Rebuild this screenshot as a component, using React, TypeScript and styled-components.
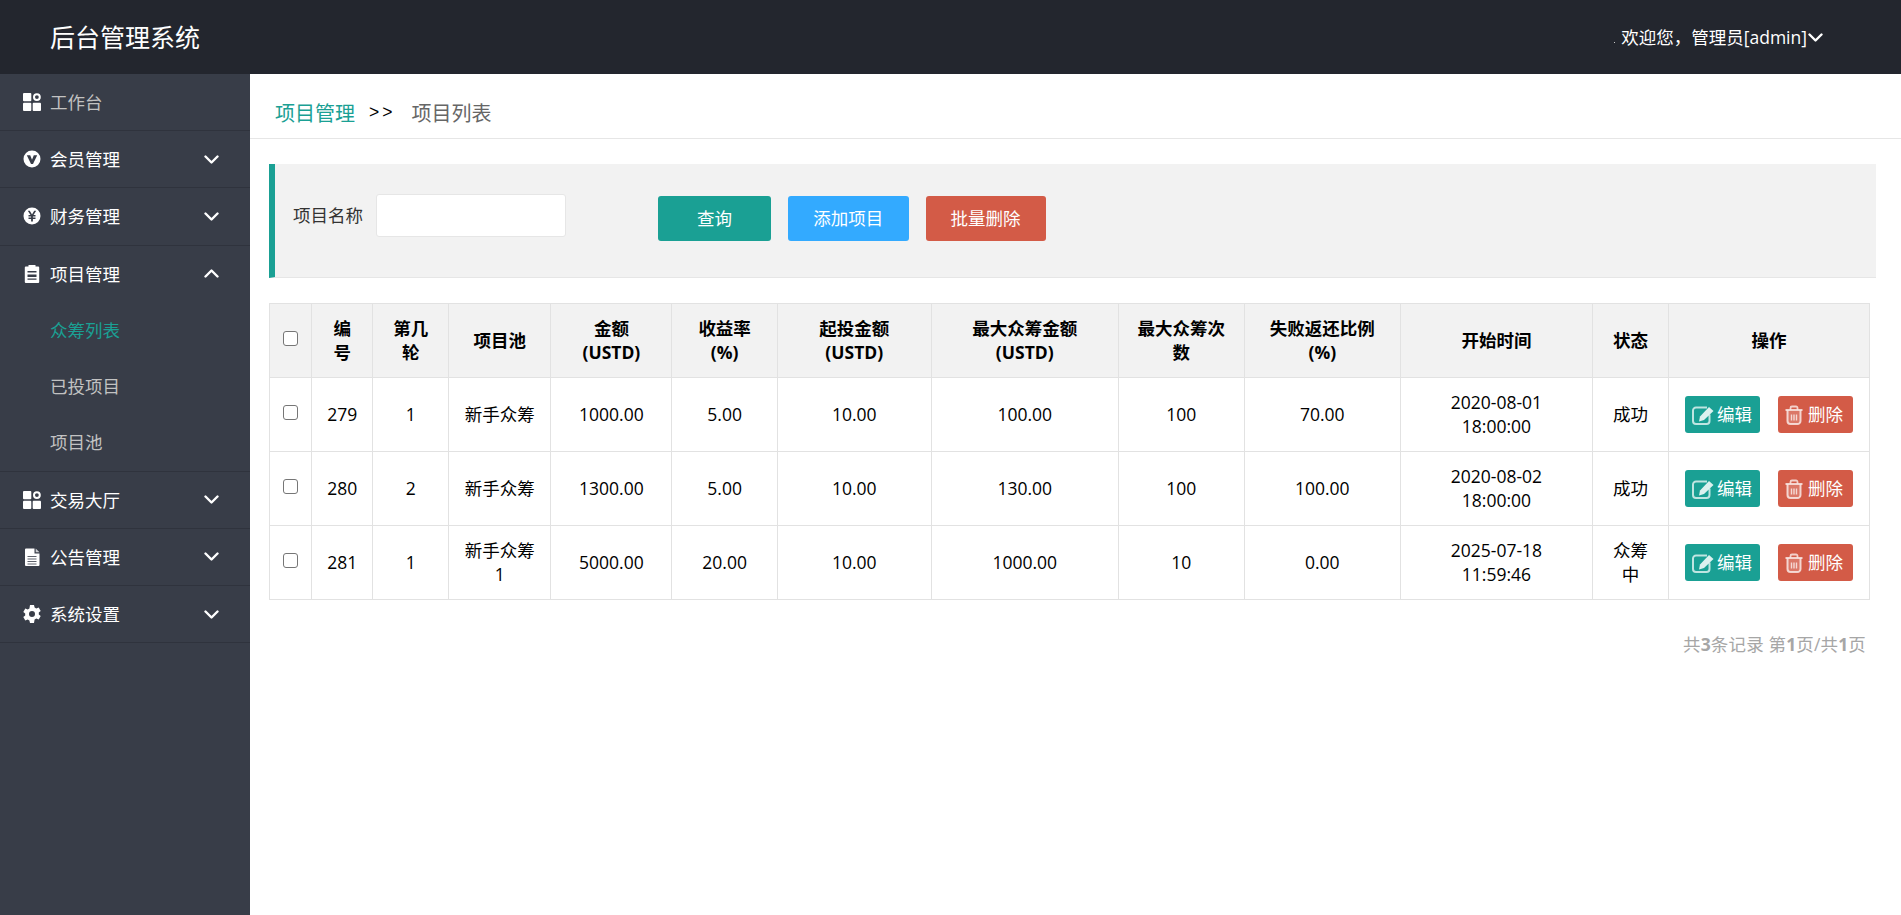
import React from "react";
import styled, { createGlobalStyle } from "styled-components";

const Global = createGlobalStyle`
  html, body { margin: 0; padding: 0; height: 100%; background: #fff; }
  body {
    font-family: "Open Sans", "Noto Sans CJK SC", sans-serif;
    font-size: 17.5px;
    color: #000;
    overflow: hidden;
  }
  #root { height: 100%; }
`;

const Page = styled.div`
  height: 915px;
  display: flex;
  flex-direction: column;
`;

const TopBar = styled.header`
  height: 74px;
  flex: none;
  background: #23262e;
  color: #fff;
  display: flex;
  align-items: center;
  justify-content: space-between;
  padding: 0 78px 0 50px;
`;

const Brand = styled.div`
  font-size: 25px;
  line-height: 74px;
`;

const UserMenu = styled.div`
  display: flex;
  align-items: center;
  gap: 1px;
  line-height: 74px;
`;

const UserDot = styled.i`
  width: 1px;
  height: 1px;
  background: #c8c8c8;
  margin-right: 5px;
  transform: translateY(5px);
`;

const Body = styled.div`
  flex: 1;
  display: flex;
  min-height: 0;
`;

const Sidebar = styled.nav`
  width: 250px;
  flex: none;
  background: #383d48;
`;

const NavGroup = styled.div`
  border-bottom: 1px solid #2f333d;
`;

const NavHead = styled.div<{ $dim?: boolean }>`
  height: 56.2px;
  display: flex;
  align-items: center;
  padding: 0 31.5px 0 22px;
  color: ${(p) => (p.$dim ? "#c2c2c2" : "#fff")};
`;

const NavIcon = styled.svg`
  width: 20px;
  height: 20px;
  flex: none;
  margin-right: 8px;
  fill: #fff;
`;

const NavLabel = styled.span`
  flex: 1;
  margin-bottom: 1px;
`;

const Chevron = styled.svg<{ $up?: boolean }>`
  width: 15px;
  height: 9px;
  flex: none;
  fill: none;
  stroke: currentColor;
  stroke-width: 2.4;
  stroke-linecap: round;
  stroke-linejoin: round;
  transform: ${(p) => (p.$up ? "rotate(180deg)" : "none")};
`;

const SubItem = styled.div<{ $active?: boolean }>`
  height: 56.3px;
  display: flex;
  align-items: center;
  padding: 0 0 1px 50px;
  box-sizing: border-box;
  color: ${(p) => (p.$active ? "#1aa094" : "#c2c2c2")};
`;

const Main = styled.main`
  flex: 1;
  min-width: 0;
  display: flex;
  flex-direction: column;
`;

const Crumbs = styled.div`
  height: 52px;
  flex: none;
  border-bottom: 1px solid #e6e6e6;
  display: flex;
  align-items: center;
  padding: 12px 0 0 25px;
  font-size: 20px;
`;

const CrumbLink = styled.span`
  color: #1aa094;
`;

const CrumbSep = styled.span`
  color: #000;
  font-family: "Liberation Sans", sans-serif;
  font-size: 17.5px;
  margin: 0 16px 0 14px;
  letter-spacing: 3px;
`;

const CrumbCurrent = styled.span`
  color: #666;
`;

const Content = styled.div`
  padding: 25px 25px 0 19px;
`;

const Filter = styled.div`
  height: 114px;
  box-sizing: border-box;
  background: #f2f2f2;
  border-left: 6px solid #1aa094;
  border-bottom: 1px solid #e6e6e6;
  display: flex;
  padding-left: 18px;
  padding-top: 30px;
`;

const FilterLabel = styled.label`
  color: #333;
  line-height: 43px;
  width: 83px;
  flex: none;
`;

const FilterInput = styled.input`
  width: 190px;
  height: 43px;
  box-sizing: border-box;
  border: 1px solid #e6e6e6;
  border-radius: 3px;
  background: #fff;
  padding: 0 10px;
  outline: none;
  flex: none;
`;

const Actions = styled.div`
  display: flex;
  margin-left: 92px;
  margin-top: 2px;
  gap: 17px;
`;

const Action = styled.button<{ $bg: string; $w: number }>`
  height: 45px;
  width: ${(p) => p.$w}px;
  border: 0;
  border-radius: 3px;
  background: ${(p) => p.$bg};
  color: #fff;
  font: inherit;
  padding: 0 0 2px;
`;

const Table = styled.table`
  margin-top: 25px;
  width: 1600px;
  table-layout: fixed;
  border-collapse: collapse;
  color: #000;
`;

const Col = styled.col<{ $w: number }>`
  width: ${(p) => p.$w}px;
`;

const HeadCell = styled.th`
  height: 74px;
  box-sizing: border-box;
  background: #f2f2f2;
  border: 1px solid #e2e2e2;
  padding: 11px 15px 13px;
  line-height: 24px;
  font-weight: 700;
  text-align: center;
  vertical-align: middle;
`;

const Cell = styled.td`
  height: 74px;
  box-sizing: border-box;
  border: 1px solid #e2e2e2;
  padding: 11px 15px 13px;
  line-height: 24px;
  text-align: center;
  vertical-align: middle;
`;

const BoxCell = styled(Cell)`
  padding: 0;
`;

const ActionCell = styled(Cell)`
  padding: 0;
`;

const BoxHead = styled(HeadCell)`
  padding: 0;
`;

const Check = styled.input.attrs({ type: "checkbox" })`
  appearance: none;
  display: block;
  width: 15px;
  height: 15px;
  box-sizing: border-box;
  margin: -4px auto 0;
  border: 1.5px solid #767676;
  border-radius: 3px;
  background: #fff;
`;

const RowActions = styled.div`
  display: flex;
  justify-content: center;
  gap: 18px;
`;

const RowButton = styled.button<{ $bg: string; $gap: number }>`
  width: 75px;
  height: 37px;
  border: 0;
  border-radius: 3px;
  padding: 0 0 0 7px;
  background: ${(p) => p.$bg};
  color: #fff;
  font: inherit;
  line-height: 37px;
  display: flex;
  align-items: center;
  gap: ${(p) => p.$gap}px;
`;

const RowIcon = styled.svg<{ $w: number }>`
  width: ${(p) => p.$w}px;
  height: 20px;
  flex: none;
  fill: none;
  stroke: rgba(255, 255, 255, 0.72);
`;

const Pager = styled.div`
  width: 1597px;
  margin-top: 32px;
  text-align: right;
  color: #a6a6a6;
  line-height: 24px;
  letter-spacing: 0.15px;
  b { font-weight: 700; }
`;

const ChevronIcon = ({ up }: { up?: boolean }) => (
  <Chevron $up={up} viewBox="0 0 15 9">
    <path d="M1.500 1.500 7.500 7.500 13.500 1.500" />
  </Chevron>
);

const AppIcon = () => (
  <NavIcon viewBox="0 0 20 20">
    <rect x="1" y="1" width="8.300" height="8.300" rx="1" />
    <rect x="1" y="10.700" width="8.300" height="8.300" rx="1" />
    <rect x="10.700" y="10.700" width="8.300" height="8.300" rx="1" />
    <circle cx="14.900" cy="5.100" r="2.900" fill="none" stroke="#fff" strokeWidth="2" />
  </NavIcon>
);

const VipIcon = () => (
  <NavIcon viewBox="0 0 20 20">
    <path fillRule="evenodd" d="M10 1.500a8.500 8.500 0 1 0 0 17 8.500 8.500 0 0 0 0-17ZM4.800 6.300h3.400L10 10.800l1.800-4.500h3.400L11 15H9Z" />
  </NavIcon>
);

const YenIcon = () => (
  <NavIcon viewBox="0 0 20 20">
    <path fillRule="evenodd" d="M10 1.500a8.500 8.500 0 1 0 0 17 8.500 8.500 0 0 0 0-17ZM5.800 4.800h2l2.200 3.700 2.200-3.700h2L11.500 9h2v1.400h-2.600v1.200h2.600V13h-2.600v2.600H9.100V13H6.500v-1.400h2.600v-1.200H6.500V9h2Z" />
  </NavIcon>
);

const ClipIcon = () => (
  <NavIcon viewBox="0 0 20 20">
    <path fillRule="evenodd" d="M6.500 1h7v1.500h2.700a1 1 0 0 1 1 1V18a1 1 0 0 1-1 1H3.800a1 1 0 0 1-1-1V3.500a1 1 0 0 1 1-1h2.700ZM5.500 7v1.500h9V7Zm0 3.500V13h9v-2.500Zm0 4v1.300h9v-1.300Z" />
  </NavIcon>
);

const DocIcon = () => (
  <NavIcon viewBox="0 0 20 20">
    <path d="M3 2.500a1 1 0 0 1 1-1h8.500v5h5V18a1 1 0 0 1-1 1H4a1 1 0 0 1-1-1Z" />
    <path d="M13.700 1.500 17.500 5.300h-3.800Z" opacity=".75" />
    <path d="M5.500 9.500h9M5.500 12h9M5.500 14.500h9M5.500 17h9" stroke="#383d48" strokeWidth="1" opacity=".8" />
  </NavIcon>
);

const GearIcon = () => (
  <NavIcon viewBox="0 0 20 20">
    <path fillRule="evenodd" d="M8 1h4l.6 2.500 1.700.9 2.400-.9 2 3.400-1.900 1.700v1.800l1.900 1.700-2 3.400-2.400-.9-1.700.9L12 19H8l-.6-2.500-1.700-.9-2.400.9-2-3.400 1.900-1.700V9.600L1.300 7.900l2-3.400 2.400.9 1.700-.9ZM10 7a3 3 0 1 0 0 6 3 3 0 0 0 0-6Z" />
  </NavIcon>
);

const EditIcon = () => (
  <RowIcon $w={23} viewBox="0 0 23 20">
    <path d="M15 2.500H4a3 3 0 0 0-3 3V16a3 3 0 0 0 3 3h10.500a3 3 0 0 0 3-3V9.500" strokeWidth="2" />
    <path d="m8 11.500 9-9.500 4.500 4-9.500 9-5 1.500Z" fill="rgba(255,255,255,0.85)" stroke="none" />
  </RowIcon>
);

const TrashIcon = () => (
  <RowIcon $w={18} viewBox="0 0 18 20">
    <path d="M0.500 5h17" strokeWidth="2" />
    <path d="M5.500 4.500V3a1.500 1.500 0 0 1 1.500-1.500h4A1.500 1.500 0 0 1 12.500 3v1.500" strokeWidth="1.800" />
    <path d="M2.500 5.500V16a3 3 0 0 0 3 3h7a3 3 0 0 0 3-3V5.500" strokeWidth="2" fill="rgba(255,255,255,0.18)" />
    <path d="M6.500 9.500v6M9 9.500v6M11.500 9.500v6" strokeWidth="1.400" />
  </RowIcon>
);

const widths = [42.3, 61, 76, 102, 121.2, 105.3, 154, 187, 126, 156, 192.3, 76, 200.9];

const heads = ["编号", "第几轮", "项目池", "金额(USTD)", "收益率(%)", "起投金额(USTD)", "最大众筹金额(USTD)", "最大众筹次数", "失败返还比例(%)", "开始时间", "状态", "操作"];

const rows = [
  ["279", "1", "新手众筹", "1000.00", "5.00", "10.00", "100.00", "100", "70.00", "2020-08-01 18:00:00", "成功"],
  ["280", "2", "新手众筹", "1300.00", "5.00", "10.00", "130.00", "100", "100.00", "2020-08-02 18:00:00", "成功"],
  ["281", "1", "新手众筹1", "5000.00", "20.00", "10.00", "1000.00", "10", "0.00", "2025-07-18 11:59:46", "众筹中"],
];

export default function App() {
  return (
    <Page>
      <Global />
      <TopBar>
        <Brand>后台管理系统</Brand>
        <UserMenu>
          <UserDot />
          欢迎您，管理员[admin]
          <ChevronIcon />
        </UserMenu>
      </TopBar>
      <Body>
        <Sidebar>
          <NavGroup>
            <NavHead $dim>
              <AppIcon />
              <NavLabel>工作台</NavLabel>
            </NavHead>
          </NavGroup>
          <NavGroup>
            <NavHead><VipIcon /><NavLabel>会员管理</NavLabel><ChevronIcon /></NavHead>
          </NavGroup>
          <NavGroup>
            <NavHead><YenIcon /><NavLabel>财务管理</NavLabel><ChevronIcon /></NavHead>
          </NavGroup>
          <NavGroup>
            <NavHead><ClipIcon /><NavLabel>项目管理</NavLabel><ChevronIcon up /></NavHead>
            <SubItem $active>众筹列表</SubItem>
            <SubItem>已投项目</SubItem>
            <SubItem>项目池</SubItem>
          </NavGroup>
          <NavGroup>
            <NavHead><AppIcon /><NavLabel>交易大厅</NavLabel><ChevronIcon /></NavHead>
          </NavGroup>
          <NavGroup>
            <NavHead><DocIcon /><NavLabel>公告管理</NavLabel><ChevronIcon /></NavHead>
          </NavGroup>
          <NavGroup>
            <NavHead><GearIcon /><NavLabel>系统设置</NavLabel><ChevronIcon /></NavHead>
          </NavGroup>
        </Sidebar>
        <Main>
          <Crumbs>
            <CrumbLink>项目管理</CrumbLink>
            <CrumbSep>&gt;&gt;</CrumbSep>
            <CrumbCurrent>项目列表</CrumbCurrent>
          </Crumbs>
          <Content>
            <Filter>
              <FilterLabel>项目名称</FilterLabel>
              <FilterInput />
              <Actions>
                <Action $bg="#1aa094" $w={113}>查询</Action>
                <Action $bg="#33aaff" $w={120.5}>添加项目</Action>
                <Action $bg="#d35b47" $w={120}>批量删除</Action>
              </Actions>
            </Filter>
            <Table>
              <colgroup>
                {widths.map((w, i) => (
                  <Col key={i} $w={w} />
                ))}
              </colgroup>
              <thead>
                <tr>
                  <BoxHead><Check /></BoxHead>
                  {heads.map((h) => (
                    <HeadCell key={h}>{h}</HeadCell>
                  ))}
                </tr>
              </thead>
              <tbody>
                {rows.map((r) => (
                  <tr key={r[0]}>
                    <BoxCell><Check /></BoxCell>
                    {r.map((c, i) => (
                      <Cell key={i}>{c}</Cell>
                    ))}
                    <ActionCell>
                      <RowActions>
                        <RowButton $bg="#1aa094" $gap={2}><EditIcon />编辑</RowButton>
                        <RowButton $bg="#d35b47" $gap={5}><TrashIcon />删除</RowButton>
                      </RowActions>
                    </ActionCell>
                  </tr>
                ))}
              </tbody>
            </Table>
            <Pager>
              共<b>3</b>条记录 第<b>1</b>页/共<b>1</b>页
            </Pager>
          </Content>
        </Main>
      </Body>
    </Page>
  );
}
